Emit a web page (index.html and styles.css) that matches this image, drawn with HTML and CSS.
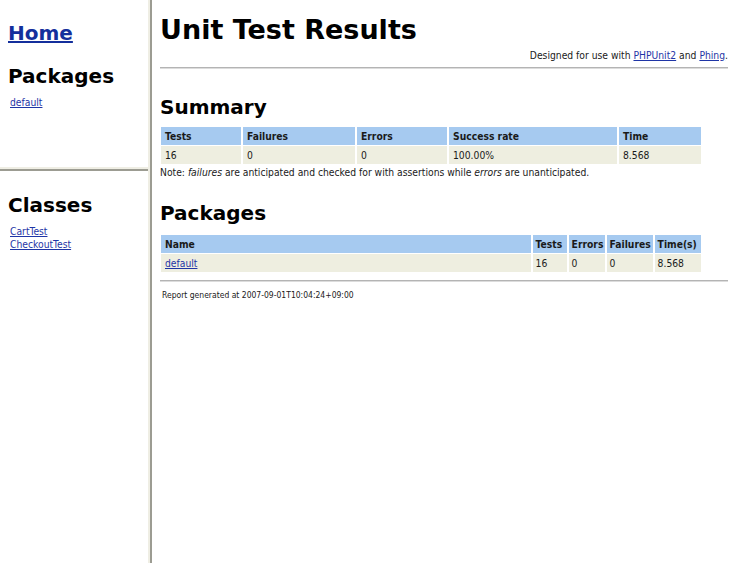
FILE: index.html
```html
<!DOCTYPE html>
<html>
<head>
<meta charset="utf-8">
<title>Unit Test Results</title>
<link rel="stylesheet" href="styles.css">
</head>
<body>
<div class="frameset">
  <div class="side">
    <div class="frame side-top">
      <h2 class="h-home"><a href="#">Home</a></h2>
      <h2 class="h-side">Packages</h2>
      <ul class="navlist">
        <li><a href="#">default</a></li>
      </ul>
    </div>
    <div class="hsplit"></div>
    <div class="frame side-bottom">
      <h2 class="h-classes">Classes</h2>
      <ul class="navlist">
        <li><a href="#">CartTest</a></li>
        <li><a href="#">CheckoutTest</a></li>
      </ul>
    </div>
  </div>
  <div class="vsplit"></div>
  <div class="frame main">
    <h1>Unit Test Results</h1>
    <p class="credit">Designed for use with <a href="#">PHPUnit2</a> and <a href="#">Phing</a>.</p>
    <hr>
    <h2 class="h-summary">Summary</h2>
    <table class="details summary">
      <colgroup>
        <col class="c-tests"><col class="c-fail"><col class="c-err"><col class="c-rate"><col class="c-time">
      </colgroup>
      <tr><th>Tests</th><th>Failures</th><th>Errors</th><th>Success rate</th><th>Time</th></tr>
      <tr><td>16</td><td>0</td><td>0</td><td>100.00%</td><td>8.568</td></tr>
    </table>
    <p class="note">Note: <i>failures</i> are anticipated and checked for with assertions while <i>errors</i> are unanticipated.</p>
    <h2 class="h-packages">Packages</h2>
    <table class="details packages">
      <colgroup>
        <col class="p-name"><col class="p-tests"><col class="p-err"><col class="p-fail"><col class="p-time">
      </colgroup>
      <tr><th>Name</th><th>Tests</th><th>Errors</th><th>Failures</th><th>Time(s)</th></tr>
      <tr><td><a href="#">default</a></td><td>16</td><td>0</td><td>0</td><td>8.568</td></tr>
    </table>
    <hr class="hr-bottom">
    <p class="generated">Report generated at 2007-09-01T10:04:24+09:00</p>
  </div>
</div>
</body>
</html>
```
FILE: styles.css
```css
* { box-sizing: border-box; }
html, body { margin: 0; padding: 0; background: #fff; }
body {
  font-family: "DejaVu Sans Condensed", "DejaVu Sans", Verdana, sans-serif;
  font-stretch: condensed;
  font-size: 10.25px;
  line-height: 13px;
  color: #1a1a1a;
}
a { color: #1f35a6; text-decoration: underline; }

.frameset {
  display: grid;
  grid-template-columns: 148px 4px 584px;
  height: 563px;
  width: 750px;
  overflow: hidden;
}
.side { display: flex; flex-direction: column; height: 563px; }
.side-top { height: 167px; padding: 21px 8px 0 8px; }
.hsplit {
  height: 4px;
  background: linear-gradient(#efeee4 0 2px, #9c9c92 2px 4px);
}
.side-bottom { flex: 1; padding: 22px 8px 0 8px; }
.vsplit {
  background: linear-gradient(90deg, #efeee4 0 2px, #9c9c92 2px 4px);
}

h1, h2 {
  font-family: "DejaVu Sans", Verdana, sans-serif;
  font-stretch: normal;
  font-weight: bold;
  color: #000;
  margin: 0;
}
h1 { font-size: 27px; line-height: 32px; }
h2 { font-size: 20px; line-height: 24px; }
.h-home a { color: #142f9c; }
.h-side { margin-top: 19px; }
.navlist { list-style: none; margin: 8px 0 0 0; padding: 0 0 0 2px; }
.navlist li { line-height: 13px; }

.main { padding: 14px 8px 0 8px; }
.credit { margin: 3px 0 0 0; text-align: right; }
hr {
  margin: 5px 0 0 0;
  height: 2px;
  border: 0;
  border-top: 1px solid #b4b4b4;
  border-bottom: 1px solid #dcdcdc;
}
.h-summary { margin-top: 26px; }

table.details {
  width: calc(95% + 4px);
  border-collapse: separate;
  border-spacing: 2px 1px;
  margin: 7px 0 0 -1px;
  table-layout: fixed;
}
.c-tests { width: 80px; }
.c-fail { width: 112px; }
.c-err { width: 90px; }
.c-rate { width: 168px; }
.p-tests { width: 34px; }
.p-err { width: 36px; }
.p-fail { width: 46px; }
.p-time { width: 46px; }
table.details th,
table.details td {
  height: 18px;
  padding: 0 4px;
  text-align: left;
  vertical-align: middle;
  white-space: nowrap;
  overflow: hidden;
}
table.details th { background: #a6caf0; font-weight: bold; }
table.details td { background: #eeeee0; }
table.packages { margin-top: 9px; }
table.packages th, table.packages td { padding: 0 2px 0 4px; }
table.packages th + th, table.packages td + td { padding-left: 3px; padding-right: 0; }

.note { margin: 1px 0 0 0; }
.h-packages { margin-top: 22px; }
.hr-bottom { margin-top: 7px; }
.generated { margin: 7px 0 0 2px; font-size: 8.5px; }
```
